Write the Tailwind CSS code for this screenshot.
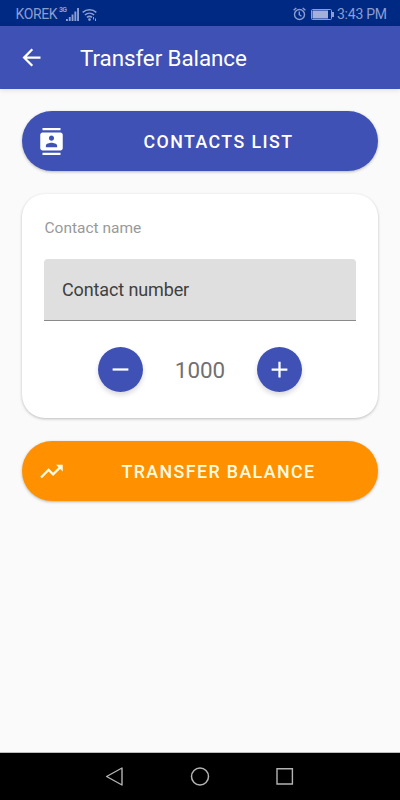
<!DOCTYPE html>
<html lang="en">
<head>
  <meta charset="UTF-8"/>
  <meta name="viewport" content="width=device-width, initial-scale=1.0"/>
  <title>Transfer Balance</title>
  <script src="https://cdn.jsdelivr.net/npm/@tailwindcss/browser@4"></script>
</head>
<body class="flex h-screen flex-col overflow-hidden bg-[#fafafa] font-[Roboto,sans-serif]">

  <!-- Status bar -->
  <div class="flex h-[26px] shrink-0 items-center justify-between bg-[#002984] pt-[2px] pr-[14px] pl-[15.5px] text-[#8c9dd0]">
    <div class="flex items-center">
      <span class="w-[42.5px] text-[14px] leading-none tracking-[-0.4px]">KOREK</span>
      <span class="mb-2 ml-px w-[7px] text-[7px] leading-none font-bold tracking-[-0.8px]">3G</span>
      <svg class="h-[13px] w-[13px]" viewBox="0 0 13 13" fill="currentColor">
        <path d="M0 11h1.9v2H0zM2.8 9h1.9v4H2.8zM5.6 6.5h1.9V13H5.6zM8.4 3.5h1.9V13H8.4zM11.1 0H13v13h-1.9z"/>
      </svg>
      <svg class="ml-[3px] h-[13px] w-4" viewBox="0 0 16 13" fill="none" stroke="currentColor" stroke-width="1.6">
        <path d="M.7 4.3a10.3 10.3 0 0 1 13.6 0M2.9 7a7 7 0 0 1 9.2 0M5 9.4a3.8 3.8 0 0 1 5 0"/>
        <circle cx="7.5" cy="11.6" r="1.3" fill="currentColor" stroke="none"/>
        <path d="M11.5 9v2.5M13.5 10.5V13" stroke-width="1"/>
      </svg>
    </div>
    <div class="flex items-center">
      <svg class="h-[14px] w-[13px]" viewBox="0 0 13 14" fill="none" stroke="currentColor" stroke-width="1.4">
        <circle cx="6.5" cy="7.5" r="5"/>
        <path d="M6.3 4.5v3.2l2.2 1.6M.6 3.3 3.3 1M12.4 3.3 9.7 1"/>
      </svg>
      <svg class="ml-[5px] h-[11px] w-[23px]" viewBox="0 0 23 11" fill="none" stroke="currentColor">
        <rect x=".5" y=".5" width="20" height="10" rx="1"/>
        <path d="M1.5 1.5h15.5v8H1.5z" fill="#a3b0da" stroke="none"/>
        <path d="M22 3v5" stroke-width="2"/>
      </svg>
      <span class="ml-[3.5px] w-[49px] text-[14px] leading-none whitespace-nowrap tracking-[-0.25px]">3:43 PM</span>
    </div>
  </div>

  <!-- App bar -->
  <header class="z-10 flex h-[63px] shrink-0 items-center bg-[#3f51b5] pl-[17.5px] text-white shadow-[0_1px_5px_rgba(0,0,0,0.12)]">
    <svg class="h-[27px] w-[27px]" viewBox="0 0 24 24" fill="currentColor">
      <path d="M20 11H7.83l5.59-5.59L12 4l-8 8 8 8 1.41-1.41L7.83 13H20v-2z"/>
    </svg>
    <h1 class="ml-[35.5px] pt-px text-[22.4px] leading-none tracking-[-0.08px]">Transfer Balance</h1>
  </header>

  <!-- Content -->
  <main class="flex flex-1 flex-col px-[22px] pt-[22px]">
    <button class="flex h-[60px] shrink-0 items-center rounded-full bg-[#3f51b5] pl-4 text-white shadow-[0_1px_3px_rgba(0,0,0,0.28)]">
      <svg class="h-[27px] w-[27px]" viewBox="0 0 24 24" fill="currentColor">
        <path d="M20 0H4v2h16V0zM4 24h16v-2H4v2zM20 4H4c-1.1 0-2 .9-2 2v12c0 1.1.9 2 2 2h16c1.1 0 2-.9 2-2V6c0-1.1-.9-2-2-2zm-8 2.75c1.24 0 2.25 1.01 2.25 2.25s-1.01 2.25-2.25 2.25S9.75 10.24 9.75 9 10.76 6.75 12 6.75zM17 17H7v-1.5c0-1.67 3.33-2.5 5-2.5s5 .83 5 2.5V17z"/>
      </svg>
      <span class="flex-1 pt-0.5 pr-[6px] text-center text-[17.8px] font-medium tracking-[1.45px]">CONTACTS LIST</span>
    </button>

    <!-- Transfer form -->
    <section class="mt-[23px] h-[224px] shrink-0 rounded-[23px] bg-white px-[22px] pt-6 shadow-[0_1px_3px_rgba(0,0,0,0.25)]">
      <p class="pl-[0.5px] text-[15.5px] leading-5 text-[#999]">Contact name</p>
      <div class="mt-[21px] flex h-[62px] items-center rounded-t border-b border-[#8a8a8a] bg-[#dfdfdf] pl-[18px] text-[18px] tracking-[-0.12px] text-[#404040]">Contact number</div>
      <div class="mt-[26px] flex items-center justify-center">
        <button class="flex h-[45px] w-[45px] items-center justify-center rounded-full bg-[#3f51b5] text-white shadow-[0_3px_5px_rgba(0,0,0,0.15)]">
          <svg class="h-[27px] w-[27px]" viewBox="0 0 24 24" fill="currentColor"><path d="M19 13H5v-2h14v2z"/></svg>
        </button>
        <span class="w-[114px] pt-px text-center text-[22.4px] leading-none text-[#707070]">1000</span>
        <button class="flex h-[45px] w-[45px] items-center justify-center rounded-full bg-[#3f51b5] text-white shadow-[0_3px_5px_rgba(0,0,0,0.15)]">
          <svg class="h-[27px] w-[27px]" viewBox="0 0 24 24" fill="currentColor"><path d="M19 13h-6v6h-2v-6H5v-2h6V5h2v6h6v2z"/></svg>
        </button>
      </div>
    </section>

    <button class="mt-[23px] flex h-[60px] shrink-0 items-center rounded-full bg-[#ff9100] pl-4 text-[#fffbe0] shadow-[0_1px_3px_rgba(0,0,0,0.28)]">
      <svg class="h-[27px] w-[27px]" viewBox="0 0 24 24" fill="currentColor">
        <path d="M16 6l2.29 2.29-4.88 4.88-4-4L2 16.59 3.41 18l6-6 4 4 6.3-6.29L22 12V6z"/>
      </svg>
      <span class="flex-1 pt-0.5 pr-[6px] text-center text-[17.8px] font-medium tracking-[1.4px]">TRANSFER BALANCE</span>
    </button>
  </main>

  <!-- Navigation bar -->
  <nav class="flex h-12 shrink-0 items-center justify-center gap-[65px] border-t border-[#bdbdbd] bg-black text-[#b4b4b4]">
    <svg class="h-5 w-5" viewBox="0 0 20 20" fill="none" stroke="currentColor" stroke-width="1.4" stroke-linejoin="round"><path d="M17 1v17L1.6 9.5z"/></svg>
    <svg class="h-5 w-5" viewBox="0 0 20 20" fill="none" stroke="currentColor" stroke-width="1.5"><circle cx="10" cy="9.5" r="8.5"/></svg>
    <svg class="h-5 w-5" viewBox="0 0 20 20" fill="none" stroke="currentColor" stroke-width="1.4"><path d="M2 1.8h15.4V17H2z"/></svg>
  </nav>
</body>
</html>
